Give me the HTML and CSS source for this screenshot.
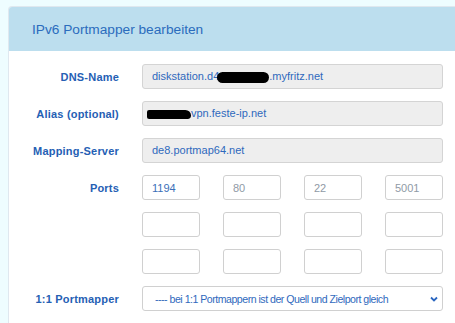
FILE: index.html
```html
<!DOCTYPE html>
<html lang="de">
<head>
  <meta charset="UTF-8">
  <meta name="viewport" content="width=device-width, initial-scale=1.0">
  <title>IPv6 Portmapper bearbeiten</title>
  <link rel="stylesheet" href="styles.css">
</head>
<body>

  <!-- Panel: Portmapper bearbeiten -->
  <div class="panel">
    <div class="panel-heading">IPv6 Portmapper bearbeiten</div>

    <form class="panel-body">
      <div class="row">
        <label class="row-label">DNS-Name</label>
        <div class="field readonly">diskstation.d4<span class="blot blot-dns"></span>.myfritz.net</div>
      </div>

      <div class="row">
        <label class="row-label">Alias (optional)</label>
        <div class="field readonly"><span class="blot blot-alias"></span>vpn.feste-ip.net</div>
      </div>

      <div class="row">
        <label class="row-label">Mapping-Server</label>
        <div class="field readonly">de8.portmap64.net</div>
      </div>

      <!-- Ports: 3 Zeilen à 4 Felder -->
      <div class="row">
        <label class="row-label">Ports</label>
        <div class="ports">
          <input class="port" type="text" value="1194">
          <input class="port" type="text" placeholder="80">
          <input class="port" type="text" placeholder="22">
          <input class="port" type="text" placeholder="5001">
        </div>
      </div>
      <div class="row">
        <span class="row-label"></span>
        <div class="ports">
          <input class="port" type="text">
          <input class="port" type="text">
          <input class="port" type="text">
          <input class="port" type="text">
        </div>
      </div>
      <div class="row">
        <span class="row-label"></span>
        <div class="ports">
          <input class="port" type="text">
          <input class="port" type="text">
          <input class="port" type="text">
          <input class="port" type="text">
        </div>
      </div>

      <div class="row">
        <label class="row-label">1:1 Portmapper</label>
        <div class="select-wrap">
          <select class="select">
            <option>---- bei 1:1 Portmappern ist der Quell und Zielport gleich</option>
          </select>
          <svg class="chevron" width="8" height="6" viewBox="0 0 8 6">
            <path d="M1 1.5 L4 4.5 L7 1.5" fill="none" stroke="#2a66c0" stroke-width="1.8"/>
          </svg>
        </div>
      </div>
    </form>
  </div>

</body>
</html>
```

FILE: styles.css
```css
/* Seite */
body {
  margin: 0;
  background-color: #eefdff;
  font-family: "Liberation Sans", Arial, sans-serif;
  overflow: hidden;
}
/* Panel */
.panel {
  margin: 6px -20px 0 8px;
  background-color: #fff;
  border: 1px solid #dfe8ef;
  border-bottom: none;
  border-radius: 4px 4px 0 0;
  height: calc(100vh - 7px);
}
.panel-heading {
  height: 44px;
  display: flex;
  align-items: center;
  padding-left: 23px;
  background-color: #bcdeee;
  color: #2b6cbd;
  font-size: 13.7px;
  border-radius: 3px 3px 0 0;
}
.panel-body {
  padding-top: 13px;
}
/* Zeilen */
.row {
  display: grid;
  grid-template-columns: 110px 301px;
  column-gap: 23px;
  align-items: center;
  margin-bottom: 12px;
}
.row-label {
  text-align: right;
  font-size: 11px;
  font-weight: bold;
  color: #2560b4;
  letter-spacing: 0.2px;
}
.field {
  height: 23px;
  line-height: 23px;
  border: 1px solid #d4d4d4;
  border-radius: 3px;
  padding: 0 9px;
  font-size: 11px;
  color: #2f69bd;
  white-space: nowrap;
  overflow: hidden;
}
.readonly {
  background-color: #eeeeee;
}
/* Geschwärzte Stellen */
.blot {
  display: inline-block;
  background-color: #000;
  border-radius: 6px;
  vertical-align: middle;
}
.blot-dns {
  width: 52px;
  height: 11px;
  margin: 0 0 0 -2px;
}
.blot-alias {
  width: 44px;
  height: 9px;
  margin-left: -5px;
  border-radius: 3px 8px 5px 3px;
}
/* Ports */
.ports {
  display: grid;
  grid-template-columns: repeat(4, 58px);
  column-gap: 23px;
}
.port {
  box-sizing: border-box;
  width: 58px;
  height: 25px;
  border: 1px solid #d0d0d0;
  border-radius: 3px;
  padding: 0 9px;
  font-family: "Liberation Sans", Arial, sans-serif;
  font-size: 11px;
  color: #3b6fb8;
  background-color: #fff;
}
.port::placeholder {
  color: #8f9aa6;
}
/* Auswahl */
.select-wrap {
  position: relative;
}
.select {
  appearance: none;
  box-sizing: border-box;
  width: 301px;
  height: 25px;
  border: 1px solid #d0d0d0;
  border-radius: 3px;
  padding: 0 0 0 12px;
  font-family: "Liberation Sans", Arial, sans-serif;
  font-size: 10.6px;
  letter-spacing: -0.5px;
  color: #2f69bd;
  background-color: #fff;
}
.chevron {
  position: absolute;
  right: 5px;
  top: 10px;
}
```
